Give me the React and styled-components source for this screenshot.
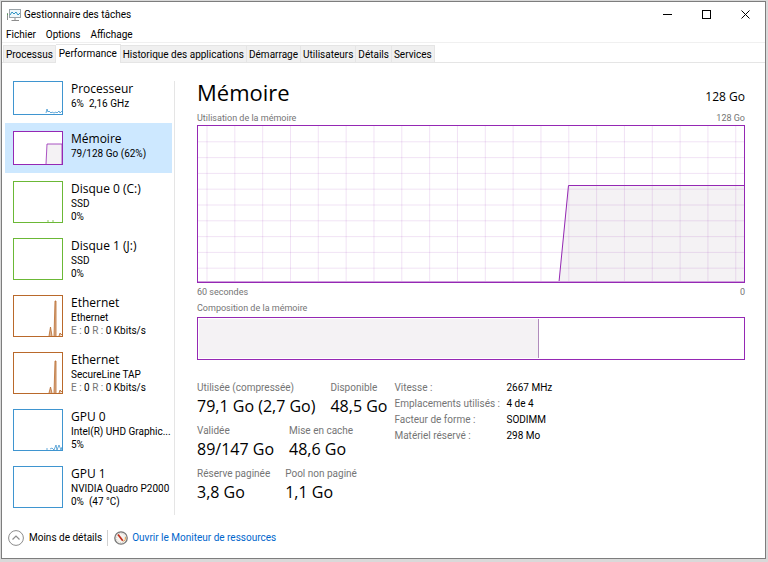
import React from 'react'
import styled, {createGlobalStyle} from 'styled-components'

const white = '#ffffff'
const grey100 = '#f0f0f0'
const grey200 = '#e5e5e5'
const grey600 = '#757575'
const black = '#000000'
const blue = '#0066cc'
const purple = '#9528b4'
const purpleFill = '#f4f2f4'
const cpuBlue = '#3f95d0'
const diskGreen = '#6bb836'
const netBrown = '#b9692b'

const displayFont = "'Open Sans', 'Noto Sans', sans-serif"

const GlobalStyle = createGlobalStyle`
  * {
    box-sizing: border-box;
  }
  body {
    margin: 0;
    background-color: #d9d9d9;
    color: ${black};
    font-family: Roboto, 'Open Sans', sans-serif;
    font-size: 10px;
    line-height: 14px;
  }
  button {
    font: inherit;
    color: inherit;
    border: none;
    background: none;
    padding: 0;
    margin: 0;
  }
`

const Page = styled.div`
  display: flex;
  min-height: 100vh;
  padding: 1px 2px 3px 1px;
`

const Window = styled.div`
  display: flex;
  flex-direction: column;
  flex: 1;
  min-width: 0;
  background-color: ${white};
  border: 1px solid #7d7d7d;
`

const TitleBar = styled.header`
  display: flex;
  align-items: center;
  height: 25px;
  padding-left: 5px;
`

const WindowTitle = styled.h1`
  flex: 1;
  margin: 0 0 0 3px;
  font-size: 10px;
  font-weight: 400;
`

const WindowButton = styled.button`
  display: flex;
  align-items: center;
  justify-content: center;
  width: 39px;
  height: 25px;
`

const MenuBar = styled.nav`
  display: flex;
  gap: 10px;
  height: 16px;
  padding: 1px 0 0 4px;
  border-bottom: 1px solid ${grey100};
`

const TabBar = styled.div`
  display: flex;
  align-items: flex-end;
  height: 20px;
  padding-left: 1px;
  border-bottom: 1px solid ${grey200};
`

const Tab = styled.button`
  height: ${props => (props.$active ? 19 : 17)}px;
  margin-bottom: ${props => (props.$active ? -1 : 0)}px;
  padding: ${props => (props.$active ? '0 3px' : '2px 2px 0')};
  background-color: ${props => (props.$active ? white : grey100)};
  border: 1px solid ${grey200};
  border-left-width: ${props => (props.$first ? 1 : 0)}px;
  border-bottom: none;
  white-space: nowrap;
`

const Body = styled.div`
  display: flex;
  flex: 1;
  padding: 10px 20px 3px 3px;
`

const SideBar = styled.nav`
  width: 167px;
  flex-shrink: 0;
`

const Item = styled.button`
  display: flex;
  width: 100%;
  padding: 8px 0 ${props => (props.$tall ? 7 : 8)}px 8px;
  background-color: ${props => (props.$active ? '#cde8ff' : 'transparent')};
  text-align: left;
`

const Thumb = styled.svg`
  display: block;
  flex-shrink: 0;
  width: 50px;
  height: ${props => (props.$tall ? 42 : 34)}px;
  background-color: ${white};
  border: 1px solid ${props => props.$color};
`

const ItemText = styled.span`
  display: flex;
  flex-direction: column;
  margin-left: 8px;
`

const ItemName = styled.span`
  font-family: ${displayFont};
  font-size: 12px;
  line-height: 16px;
`

const ItemLine = styled.span`
  line-height: 13px;
  white-space: nowrap;
`

const Muted = styled.span`
  color: ${grey600};
`

const Divider = styled.div`
  width: 1px;
  margin: 8px 22px 0 2px;
  background-color: ${grey200};
`

const Main = styled.main`
  display: flex;
  flex-direction: column;
  flex: 1;
  min-width: 0;
  padding-top: 4px;
`

const Between = styled.div`
  display: flex;
  justify-content: space-between;
  align-items: flex-end;
`

const Heading = styled.h2`
  margin: 0 0 2px;
  font-family: ${displayFont};
  font-size: 22px;
  font-weight: 400;
  line-height: 30px;
`

const Total = styled.span`
  font-family: ${displayFont};
  font-size: 12px;
  line-height: 24px;
`

const Caption = styled.span`
  padding-top: 2px;
  color: ${grey600};
  font-size: 9px;
  line-height: 14px;
`

const Chart = styled.svg`
  display: block;
  width: 100%;
  height: 158px;
  border: 1px solid ${purple};
`

const Composition = styled.div`
  display: flex;
  height: 43px;
  margin-top: 2px;
  padding: 1px;
  border: 1px solid ${purple};
`

const Used = styled.div`
  background-color: ${purpleFill};
  border-right: 1px solid #b08cbc;
`

const Details = styled.div`
  display: flex;
  align-items: flex-start;
  gap: 7px;
  margin-top: 19px;
`

const Stats = styled.div`
  display: flex;
  flex-direction: column;
  gap: 5px;
`

const StatRow = styled.div`
  display: flex;
  gap: 15px;
`

const Stat = styled.div`
  display: flex;
  flex-direction: column;
`

const StatLabel = styled.span`
  padding-top: 2px;
  color: ${grey600};
  line-height: 14px;
  white-space: nowrap;
`

const StatValue = styled.span`
  font-family: ${displayFont};
  font-size: 16px;
  line-height: 22px;
  white-space: nowrap;
`

const Specs = styled.table`
  border-collapse: collapse;
  line-height: 14px;
  white-space: nowrap;

  th {
    width: 112px;
    padding: 2px 0 0;
    color: ${grey600};
    font-weight: 400;
    text-align: left;
  }
  td {
    padding: 2px 0 0;
  }
`

const Footer = styled.footer`
  display: flex;
  align-items: center;
  height: 40px;
  padding-left: 6px;
`

const FewerButton = styled.button`
  display: flex;
  align-items: center;
  gap: 5px;
  padding-right: 5px;
  border-right: 1px solid #d0d0d0;
`

const MonitorLink = styled.a`
  display: flex;
  align-items: center;
  gap: 4px;
  margin-left: 6px;
  color: ${blue};
  text-decoration: none;
`

const menus = ['Fichier', 'Options', 'Affichage']

const tabs = [
  'Processus',
  'Performance',
  'Historique des applications',
  'Démarrage',
  'Utilisateurs',
  'Détails',
  'Services',
]

const network = (
  <>
    <Muted>E :</Muted> 0 <Muted>R :</Muted> 0 Kbits/s
  </>
)

const devices = [
  {
    name: 'Processeur',
    lines: ['6%\u00a0 2,16 GHz'],
    color: cpuBlue,
    path: 'M32 31 L33 27 L34 30 L35 29 L37 31 L38 30 L40 31 L42 30 L43 31 L45 29 L46 31 L48 29',
  },
  {
    name: 'Mémoire',
    lines: ['79/128 Go (62%)'],
    color: purple,
    active: true,
    path: 'M32 32 L33 12 L48 12 L48 32',
    fill: purpleFill,
  },
  {
    name: 'Disque 0 (C:)',
    lines: ['SSD', '0%'],
    color: diskGreen,
    path: 'M33 39 L35 39 M38 39 L40 39',
  },
  {name: 'Disque 1 (J:)', lines: ['SSD', '0%'], color: diskGreen},
  {
    name: 'Ethernet',
    lines: ['Ethernet', network],
    color: netBrown,
    path: 'M35 40 L36.5 31 L38 40 M40 40 L41 5 L42 5 L42 40 M45 40 L46 37 L48 39',
    fill: netBrown,
  },
  {
    name: 'Ethernet',
    lines: ['SecureLine TAP', network],
    color: netBrown,
    path: 'M35 40 L36.5 34 L38 40 M40 40 L41 8 L42 8 L42 40 M45 40 L46 37 L48 39',
    fill: netBrown,
  },
  {
    name: 'GPU 0',
    lines: ['Intel(R) UHD Graphic...', '5%'],
    color: cpuBlue,
    path: 'M32 39 L34 39 M36 39 L38 38 L40 40 L42 35 L43 40 L45 35 L47 40 L48 37',
  },
  {name: 'GPU 1', lines: ['NVIDIA Quadro P2000', '0%\u00a0 (47 °C)'], color: cpuBlue},
]

const stats = [
  [['Utilisée (compressée)', '79,1 Go (2,7 Go)'], ['Disponible', '48,5 Go']],
  [['Validée', '89/147 Go'], ['Mise en cache', '48,6 Go']],
  [['Réserve paginée', '3,8 Go'], ['Pool non paginé', '1,1 Go']],
]

const specs = [
  ['Vitesse :', '2667 MHz'],
  ['Emplacements utilisés :', '4 de 4'],
  ['Facteur de forme :', 'SODIMM'],
  ['Matériel réservé :', '298 Mo'],
]

const columns = Array.from({length: 20}, (_, i) => 9 + i * 27.83)
const rows = Array.from({length: 9}, (_, i) => (i + 1) * 15.8)

const AppIcon = () => (
  <svg width="14" height="12" viewBox="0 0 14 12" fill="none">
    <rect x="2.5" y="0.5" width="11" height="8" fill="#eef7fb" stroke="#9aa3a8" />
    <path d="M3 6 L5 3 L7 5 L9 3 L11 6 L13 4" stroke="#2e93c4" />
    <path d="M0.5 4 V11" stroke="#8d8d8d" />
    <path d="M0 5.5 H1" stroke="#49a84c" />
    <path d="M8 9 V11 M4.5 11.5 H12" stroke="#8d8d8d" />
  </svg>
)

const GaugeIcon = () => (
  <svg width="14" height="14" viewBox="0 0 14 14" fill="none">
    <circle cx="7" cy="7" r="6.2" fill="#f5f3ef" stroke="#777777" strokeWidth="1.3" />
    <circle cx="7" cy="7" r="4.6" stroke="#c9c5bd" strokeDasharray="1 1.4" />
    <path d="M9.5 10.5 A4.5 4.5 0 0 0 11.4 6" stroke="#e0a34a" />
    <path d="M4 3.4 L8.8 9.8" stroke="#c42f1c" strokeWidth="1.7" />
  </svg>
)

const ChevronIcon = () => (
  <svg width="16" height="16" viewBox="0 0 16 16" fill="none">
    <circle cx="8" cy="8" r="7.4" stroke="#8c8c8c" />
    <path d="M4.5 9.5 L8 6 L11.5 9.5" stroke="#8c8c8c" strokeWidth="1.2" />
  </svg>
)

const Device = ({device}) => {
  const tall = device.lines.length > 1
  return (
    <Item $active={device.active} $tall={tall}>
      <Thumb $color={device.color} $tall={tall} viewBox={`0 0 48 ${tall ? 40 : 32}`}>
        {device.path && (
          <path
            d={device.path}
            fill={device.fill || 'none'}
            fillOpacity={device.fill === netBrown ? 0.5 : 1}
            stroke={device.color}
            strokeWidth="0.8"
          />
        )}
      </Thumb>
      <ItemText>
        <ItemName>{device.name}</ItemName>
        {device.lines.map((line, i) => (
          <ItemLine key={i}>{line}</ItemLine>
        ))}
      </ItemText>
    </Item>
  )
}

const MemoryChart = () => (
  <Chart viewBox="0 0 546 156" preserveAspectRatio="none">
    <path d="M361 156 L370 59 H546 V156 Z" fill={purpleFill} />
    {columns.map(x => (
      <path key={x} d={`M${x} 0 V156`} stroke={purple} strokeOpacity="0.13" />
    ))}
    {rows.map(y => (
      <path key={y} d={`M0 ${y} H546`} stroke={purple} strokeOpacity="0.13" />
    ))}
    <path d="M361 156 L370.5 59.5 H546" fill="none" stroke={purple} />
    <path d="M0 155.5 H546" stroke="#cf9fdd" />
  </Chart>
)

const App = () => (
  <Page>
    <GlobalStyle />
    <Window>
      <TitleBar>
        <AppIcon />
        <WindowTitle>Gestionnaire des tâches</WindowTitle>
        <WindowButton aria-label="Réduire">
          <svg width="9" height="9" viewBox="0 0 9 9">
            <path d="M0 4.5 H9" stroke={black} />
          </svg>
        </WindowButton>
        <WindowButton aria-label="Agrandir">
          <svg width="9" height="9" viewBox="0 0 9 9" fill="none">
            <rect x="0.5" y="0.5" width="8" height="8" stroke={black} />
          </svg>
        </WindowButton>
        <WindowButton aria-label="Fermer">
          <svg width="9" height="9" viewBox="0 0 9 9">
            <path d="M0.5 0.5 L8.5 8.5 M8.5 0.5 L0.5 8.5" stroke={black} />
          </svg>
        </WindowButton>
      </TitleBar>
      <MenuBar>
        {menus.map(menu => (
          <button key={menu}>{menu}</button>
        ))}
      </MenuBar>
      <TabBar role="tablist">
        {tabs.map((tab, i) => (
          <Tab
            key={tab}
            role="tab"
            aria-selected={tab === 'Performance'}
            $first={i === 0}
            $active={tab === 'Performance'}
          >
            {tab}
          </Tab>
        ))}
      </TabBar>
      <Body>
        <SideBar>
          {devices.map((device, i) => (
            <Device key={i} device={device} />
          ))}
        </SideBar>
        <Divider />
        <Main>
          <Between>
            <Heading>Mémoire</Heading>
            <Total>128 Go</Total>
          </Between>
          <Between>
            <Caption>Utilisation de la mémoire</Caption>
            <Caption>128 Go</Caption>
          </Between>
          <MemoryChart />
          <Between>
            <Caption>60 secondes</Caption>
            <Caption>0</Caption>
          </Between>
          <Caption>Composition de la mémoire</Caption>
          <Composition>
            <Used style={{width: '62.5%'}} />
          </Composition>
          <Details>
            <Stats>
              {stats.map((row, i) => (
                <StatRow key={i}>
                  {row.map(([label, value]) => (
                    <Stat key={label}>
                      <StatLabel>{label}</StatLabel>
                      <StatValue>{value}</StatValue>
                    </Stat>
                  ))}
                </StatRow>
              ))}
            </Stats>
            <Specs>
              <tbody>
                {specs.map(([label, value]) => (
                  <tr key={label}>
                    <th scope="row">{label}</th>
                    <td>{value}</td>
                  </tr>
                ))}
              </tbody>
            </Specs>
          </Details>
        </Main>
      </Body>
      <Footer>
        <FewerButton>
          <ChevronIcon />
          Moins de détails
        </FewerButton>
        <MonitorLink href="#moniteur">
          <GaugeIcon />
          Ouvrir le Moniteur de ressources
        </MonitorLink>
      </Footer>
    </Window>
  </Page>
)

export default App
